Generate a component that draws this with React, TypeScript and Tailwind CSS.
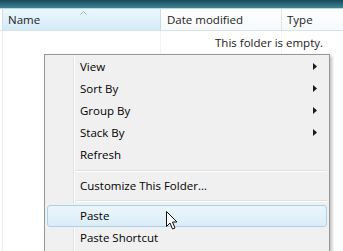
import React from "react";

const font = { fontFamily: '"Segoe UI", "Open Sans", "Liberation Sans", sans-serif' };

function Arrow() {
  return (
    <svg width="4" height="7" viewBox="0 0 4 7" className="block">
      <path d="M0 0 L4 3.5 L0 7 Z" fill="#1a1a1a" />
    </svg>
  );
}

function Item({ label, sub, hot }: { label: string; sub?: boolean; hot?: boolean }) {
  return (
    <div className="relative h-[22px] flex items-center">
      {hot && (
        <div className="absolute left-[1px] right-[1px] top-0 bottom-0 rounded-[3px] border border-[#a9d3ea] bg-gradient-to-b from-[#eaf5fc] to-[#dbedf8]" />
      )}
      <span className="relative pl-[34px] text-[11.5px] text-black leading-none">{label}</span>
      {sub && (
        <span className="absolute right-[11px] top-[7px]">
          <Arrow />
        </span>
      )}
    </div>
  );
}

function Sep({ h }: { h: number }) {
  return (
    <div className={h === 9 ? "h-[9px] flex flex-col justify-center pl-[30px] pr-[1px]" : "h-[8px] flex flex-col justify-center pl-[30px] pr-[1px]"}>
      <div className="h-px bg-[#e0e0e0]" />
      <div className="h-px bg-white" />
    </div>
  );
}

export default function App() {
  return (
    <div className="relative w-[343px] h-[251px] overflow-hidden bg-white" style={font}>
      {/* top dark bar */}
      <div className="h-[8px] bg-gradient-to-b from-[#18495a] to-[#3f8597]" />
      <div className="h-px bg-[#bcd8e3]" />
      {/* header */}
      <div className="flex h-[22px] border-b border-[#d5e3ec]">
        <div className="w-[3px] bg-white border-r border-[#d3dee6]" />
        <div className="relative w-[158px] flex items-center pl-[5px] border-r border-[#c6dcea] bg-gradient-to-b from-[#eaf6fd] via-[#e0f1fb] to-[#d2eaf7]">
          <span className="text-[11.5px] text-[#1b1b1b]">Name</span>
          <svg width="7" height="4" viewBox="0 0 7 4" className="absolute left-[77px] top-[2px]">
            <path d="M0.5 3.5 L3.5 0.5 L6.5 3.5" fill="none" stroke="#9fb1be" strokeWidth="1" />
          </svg>
        </div>
        <div className="w-[121px] flex items-center pl-[6px] border-r border-[#dde4ea] bg-gradient-to-b from-white to-[#f6f8fa]">
          <span className="text-[11.5px] text-[#1b1b1b]">Date modified</span>
        </div>
        <div className="flex-1 flex items-center pl-[5px] bg-gradient-to-b from-white to-[#f6f8fa]">
          <span className="text-[11.5px] text-[#1b1b1b]">Type</span>
        </div>
      </div>
      {/* body */}
      <div className="flex h-[220px]">
        <div className="w-[3px] border-r border-[#e4ebf0]" />
        <div className="w-[158px] border-r border-[#f1f4f6]" />
        <div className="w-[121px] border-r border-[#f1f4f6]">
          <div className="pl-[54px] pt-[3px] whitespace-nowrap text-[11.5px] text-[#1b1b1b]">This folder is empty.</div>
        </div>
        <div className="flex-1" />
      </div>

      {/* context menu */}
      <div className="absolute left-[44px] top-[54px] w-[286px] h-[210px] border border-[#979797] bg-[#f0f0f0] shadow-[2px_2px_3px_rgba(0,0,0,0.25)]">
        <div className="absolute left-[28px] top-0 bottom-0 w-px bg-[#e2e3e3]" />
        <div className="absolute left-[29px] top-0 bottom-0 w-px bg-white" />
        <div className="relative pt-px px-px">
          <Item label="View" sub />
          <Item label="Sort By" sub />
          <Item label="Group By" sub />
          <Item label="Stack By" sub />
          <Item label="Refresh" />
          <Sep h={9} />
          <Item label="Customize This Folder..." />
          <Sep h={8} />
          <Item label="Paste" hot />
          <Item label="Paste Shortcut" />
        </div>
      </div>

      {/* cursor */}
      <svg width="13" height="21" viewBox="0 0 13 21" className="absolute left-[165px] top-[210px]">
        <path
          d="M1.5 1.5 L1.5 16.5 L5 13 L7.5 19 L10 18 L7.5 12 L12 12 Z"
          fill="white"
          stroke="#111"
          strokeWidth="1"
          strokeLinejoin="miter"
        />
      </svg>
    </div>
  );
}
